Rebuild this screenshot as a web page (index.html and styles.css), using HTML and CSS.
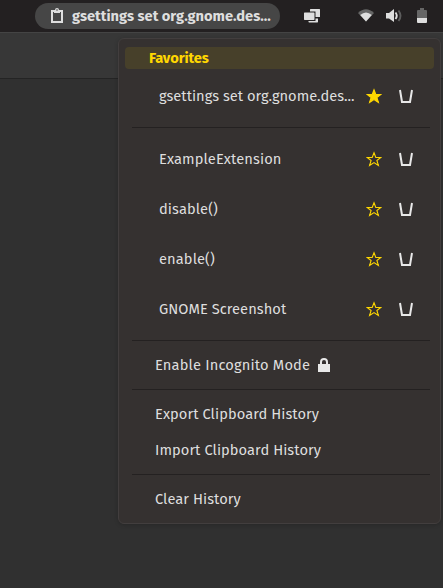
FILE: index.html
```html
<!DOCTYPE html>
<html lang="en">
<head>
<meta charset="utf-8">
<title>Clipboard History</title>
<link rel="stylesheet" href="styles.css">
</head>
<body>
<svg class="defs" aria-hidden="true">
  <symbol id="star" viewBox="0 0 16 16"><path d="M8 1.7 9.8 6.4 14.8 6.5 10.9 9.5 12.4 14.5 8 11.6 3.6 14.5 5.1 9.5 1.2 6.5 6.2 6.4Z"/></symbol>
  <symbol id="trash" viewBox="0 0 16 16"><path d="M2 2 4 14H12L14 2"/></symbol>
</svg>
<header class="topbar">
  <div class="pill">
    <svg class="clip" viewBox="0 0 12 15"><path d="M1 3H11V14H1Z" fill="none" stroke="currentColor" stroke-width="2"/><path d="M3 2H4A2 2 0 0 1 8 2H9V5H3Z" fill="currentColor"/><circle cx="6" cy="2" r=".8" fill="#464646"/></svg>
    <span class="title">gsettings set org.gnome.des...</span>
  </div>
  <svg class="windows" viewBox="0 0 16 14"><path d="M6.5 0H15.5L16 .5V8H11.5V2.5H6V.5Z" fill="currentColor"/><path d="M.5 3.5H10L10.5 4V10.5L10 11H.5L0 10.5V4Z" fill="currentColor"/><path d="M11.5 9.5H14V13L13.5 13.5H5L4.5 13V12H11.5Z" fill="currentColor"/></svg>
  <svg class="wifi" viewBox="0 0 16 13"><path d="M0 4Q8-3.5 16 4L8 12.5Z" fill="#666"/><path d="M2.2 6Q8 .8 13.8 6L8 12.5Z" fill="currentColor"/></svg>
  <svg class="sound" viewBox="0 0 16 14"><path d="M0 4H3L8 0V13L3 9.5H0Z" fill="currentColor"/><path d="M9.5 3.5Q12 6.7 9.5 10" fill="none" stroke="currentColor" stroke-width="1.9"/><path d="M12.5 1.5Q16.5 6.7 12.5 12" fill="none" stroke="#5c5c5c" stroke-width="1.9"/></svg>
  <svg class="battery" viewBox="0 0 10 15"><path d="M3 0H7V2H9Q10 2 10 3V10H0V3Q0 2 1 2H3Z" fill="#666"/><path d="M0 10H10V14Q10 15 9 15H1Q0 15 0 14Z" fill="currentColor"/></svg>
</header>
<main class="window">
  <div class="headerbar"></div>
  <nav class="menu">
    <h2 class="heading">Favorites</h2>
    <div class="entry"><span class="label">gsettings set org.gnome.des...</span><svg class="star on"><use href="#star"/></svg><svg class="trash"><use href="#trash"/></svg></div>
    <hr>
    <div class="entry"><span class="label spaced">ExampleExtension</span><svg class="star"><use href="#star"/></svg><svg class="trash"><use href="#trash"/></svg></div>
    <div class="entry"><span class="label spaced">disable()</span><svg class="star"><use href="#star"/></svg><svg class="trash"><use href="#trash"/></svg></div>
    <div class="entry"><span class="label spaced">enable()</span><svg class="star"><use href="#star"/></svg><svg class="trash"><use href="#trash"/></svg></div>
    <div class="entry"><span class="label gnome">GNOME Screenshot</span><svg class="star"><use href="#star"/></svg><svg class="trash"><use href="#trash"/></svg></div>
    <hr>
    <div class="action incognito"><span>Enable Incognito Mode</span><svg class="lock" viewBox="0 0 12 14"><path d="M0 6H12V14H0Z" fill="currentColor"/><path d="M3 7V4A3 3 0 0 1 9 4V7" fill="none" stroke="currentColor" stroke-width="2"/></svg></div>
    <hr>
    <div class="action">Export Clipboard History</div>
    <div class="action">Import Clipboard History</div>
    <hr>
    <div class="action">Clear History</div>
  </nav>
</main>
</body>
</html>
```
FILE: styles.css
```css
* { box-sizing: border-box; }
body {
  margin: 0;
  height: 588px;
  overflow: hidden;
  background: #303030;
  color: #dedede;
  font: 14.67px/20px "Fira Sans", "Noto Sans", sans-serif;
  white-space: nowrap;
}
svg { display: block; flex: none; }
.defs { position: absolute; width: 0; height: 0; }
.topbar {
  display: flex;
  height: 32px;
  padding-left: 35px;
  background: #232021;
}
.pill {
  display: flex;
  width: 245px;
  height: 26px;
  margin-top: 3px;
  padding-left: 16px;
  border-radius: 13px;
  background: #464646;
}
.clip { width: 12px; height: 15px; margin: 5px 9px 0 0; }
.title { font-weight: 700; line-height: 26px; }
.windows { width: 16px; height: 14px; margin: 9px 0 0 24px; }
.wifi { width: 16px; height: 13px; margin: 9px 0 0 38px; }
.sound { width: 16px; height: 14px; margin: 9px 0 0 12px; }
.battery { width: 10px; height: 15px; margin: 8px 0 0 15px; }
.window {
  display: grid;
  grid-template-rows: 47px 1fr;
  grid-template-columns: 118px 323px 2px;
  height: 556px;
}
.headerbar {
  grid-area: 1 / 1 / 2 / 4;
  border-top: 1px solid #444;
  border-bottom: 1px solid #242424;
  background: #373737;
}
.menu {
  grid-area: 1 / 2 / 3 / 3;
  align-self: start;
  height: 486px;
  margin-top: 6px;
  padding: 8px 6px 5px;
  border: 1px solid #423e3e;
  border-radius: 6px;
  background: #353130;
  box-shadow: 0 1px 4px #0003;
}
.heading {
  height: 22px;
  margin: 0 0 2px;
  padding-left: 24px;
  border-radius: 4px;
  background: #47402a;
  color: #ffd700;
  font-size: 14.67px;
  font-weight: 700;
  line-height: 23px;
  letter-spacing: -0.1px;
}
.entry {
  display: flex;
  align-items: center;
  height: 50px;
  padding-left: 34px;
}
.label { width: 207px; }
.spaced { letter-spacing: 0.1px; }
.gnome { letter-spacing: 0.05px; }
.star { width: 16px; height: 16px; fill: none; stroke: #ffd700; stroke-width: 1.1; }
.star.on { fill: #ffd700; }
.trash { width: 16px; height: 16px; margin-left: 16px; fill: none; stroke: #e8e8e8; stroke-width: 2; }
hr { height: 1px; margin: 6px 4px 6px 7px; border: 0; background: #242121; }
.action {
  display: flex;
  align-items: center;
  height: 36px;
  padding-left: 30px;
  letter-spacing: 0.06px;
}
.incognito { letter-spacing: 0.16px; }
.lock { width: 12px; height: 14px; margin-left: 8px; color: #e8e8e8; }
```
